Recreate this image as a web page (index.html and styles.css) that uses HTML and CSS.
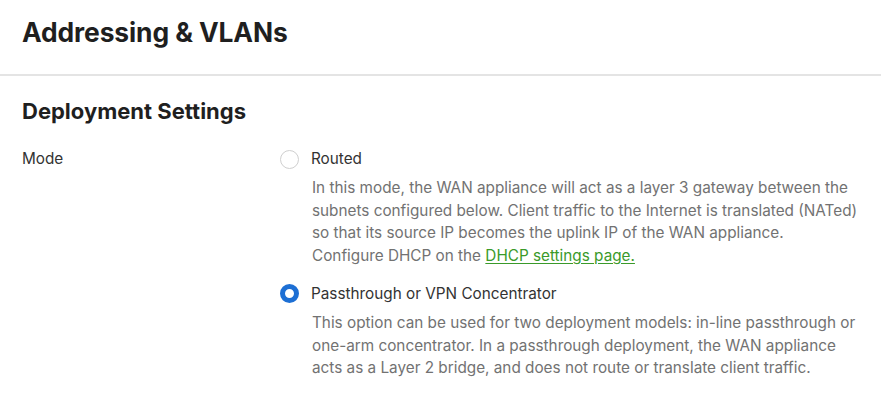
FILE: index.html
```html
<!DOCTYPE html>
<html lang="en">
<head>
<meta charset="utf-8">
<title>Addressing &amp; VLANs</title>
<link rel="stylesheet" href="styles.css">
</head>
<body>
<header class="page-header">
  <h1 class="page-title">Addressing &amp; VLANs</h1>
</header>
<section class="section">
  <h2 class="section-title">Deployment Settings</h2>
  <div class="field">
    <div class="field-label">Mode</div>
    <div class="field-control">
      <div class="option">
        <label class="option-row">
          <span class="radio"></span>
          <span class="option-label">Routed</span>
        </label>
        <p class="option-desc">In this mode, the WAN appliance will act as a layer 3 gateway between the subnets configured below. Client traffic to the Internet is translated (NATed) so that its source IP becomes the uplink IP of the WAN appliance.<br>Configure DHCP on the <a class="link" href="#">DHCP settings page.</a></p>
      </div>
      <div class="option">
        <label class="option-row">
          <span class="radio radio-checked"></span>
          <span class="option-label">Passthrough or VPN Concentrator</span>
        </label>
        <p class="option-desc">This option can be used for two deployment models: in-line passthrough or one-arm concentrator. In a passthrough deployment, the WAN appliance acts as a Layer 2 bridge, and does not route or translate client traffic.</p>
      </div>
    </div>
  </div>
</section>
</body>
</html>
```
FILE: styles.css
```css
* { box-sizing: border-box; }
html, body { margin: 0; padding: 0; background: #fff; }
body {
  font-family: Inter, "Noto Sans", sans-serif;
  color: #333;
  width: 881px;
  height: 410px;
  overflow: hidden;
}
.page-header {
  height: 76px;
  padding: 0 22px;
  border-bottom: 2px solid #e4e4e4;
  display: flex;
  align-items: flex-start;
}
.page-title {
  margin: 15px 0 0;
  font-size: 26.4px;
  font-weight: 700;
  color: #1f1f1f;
  letter-spacing: -0.1px;
  line-height: 34px;
}
.section {
  padding: 21px 22px 0;
}
.section-title {
  margin: 0 0 23px;
  font-size: 22px;
  font-weight: 700;
  color: #1f1f1f;
  line-height: 28px;
}
.field {
  display: flex;
}
.field-label {
  width: 258px;
  flex: none;
  font-size: 15.3px;
  line-height: 22px;
  color: #333;
}
.field-control {
  flex: 1;
  display: flex;
  flex-direction: column;
  gap: 15px;
}
.option-row {
  display: flex;
  align-items: center;
  gap: 12px;
  height: 22px;
}
.radio {
  width: 19px;
  height: 19px;
  border-radius: 50%;
  border: 1.5px solid #cfcfcf;
  background: #fff;
  flex: none;
}
.radio-checked {
  border: 5px solid #1d6fd4;
}
.option-label {
  font-size: 15.3px;
  line-height: 22px;
  color: #333;
}
.option-desc {
  margin: 7px 0 0 32px;
  font-size: 15.3px;
  line-height: 22.7px;
  color: #727272;
  max-width: 560px;
}
.link {
  color: #3a9a2a;
  text-decoration: underline;
  text-underline-offset: 2px;
}
```
